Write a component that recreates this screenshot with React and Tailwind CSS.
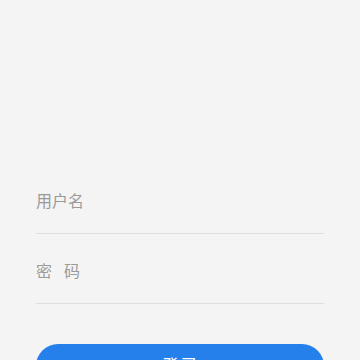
import React from "react";

export default function App() {
  return (
    <div
      className="w-full h-[360px] overflow-hidden bg-[#f4f4f4] px-9 pt-[189px]"
      style={{ fontFamily: '"Noto Sans", "Noto Sans CJK SC", sans-serif' }}
    >
      <div className="pb-5 border-b border-[#dedede]">
        <input
          className="block w-full h-6 bg-transparent outline-none text-base text-[#888] placeholder:text-[#9a9a9a]"
          placeholder="用户名"
        />
      </div>
      <div className="pt-[25px] pb-5 border-b border-[#dedede]">
        <div className="flex gap-3 h-6 items-center text-base text-[#9a9a9a]">
          <span>密</span>
          <span>码</span>
        </div>
      </div>
      <button className="mt-10 w-full h-11 rounded-full bg-[#2680eb] text-white text-lg">
        登录
      </button>
    </div>
  );
}
